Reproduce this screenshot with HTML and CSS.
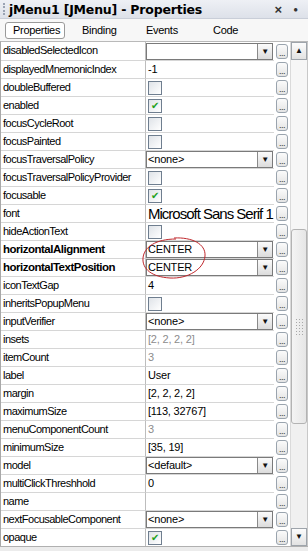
FILE: index.html
```html
<!DOCTYPE html>
<html lang="en">
<head>
    <meta charset="UTF-8">
    <title>jMenu1 [JMenu] - Properties</title>
    <link rel="stylesheet" href="styles.css">
</head>
<body>
    <div class="panel">
        <div class="titlebar">
            <span class="grip"></span>
            <span class="title">jMenu1 [JMenu] - Properties</span>
            <span class="close">&times;</span>
            <span class="dot">&#9679;</span>
        </div>
        <div class="tabs">
            <span class="tab active">Properties</span>
            <span class="tab">Binding</span>
            <span class="tab wide">Events</span>
            <span class="tab">Code</span>
        </div>
        <div class="body">
            <div class="sheet">
                <div class="row"><div class="name">disabledSelectedIcon</div><div class="value"><div class="combo"><span></span><b class="arrow">&#9660;</b></div></div><div class="more"><span>...</span></div></div>
                <div class="row"><div class="name">displayedMnemonicIndex</div><div class="value">-1</div><div class="more"><span>...</span></div></div>
                <div class="row"><div class="name">doubleBuffered</div><div class="value"><i class="check"></i></div><div class="more"><span>...</span></div></div>
                <div class="row"><div class="name">enabled</div><div class="value"><i class="check on">&#10004;</i></div><div class="more"><span>...</span></div></div>
                <div class="row"><div class="name">focusCycleRoot</div><div class="value"><i class="check"></i></div><div class="more"><span>...</span></div></div>
                <div class="row"><div class="name">focusPainted</div><div class="value"><i class="check"></i></div><div class="more"><span>...</span></div></div>
                <div class="row"><div class="name">focusTraversalPolicy</div><div class="value"><div class="combo"><span>&lt;none&gt;</span><b class="arrow">&#9660;</b></div></div><div class="more"><span>...</span></div></div>
                <div class="row"><div class="name">focusTraversalPolicyProvider</div><div class="value"><i class="check"></i></div><div class="more"><span>...</span></div></div>
                <div class="row"><div class="name">focusable</div><div class="value"><i class="check on">&#10004;</i></div><div class="more"><span>...</span></div></div>
                <div class="row"><div class="name">font</div><div class="value font-value">Microsoft Sans Serif 1</div><div class="more"><span>...</span></div></div>
                <div class="row"><div class="name">hideActionText</div><div class="value"><i class="check"></i></div><div class="more"><span>...</span></div></div>
                <div class="row"><div class="name bold">horizontalAlignment</div><div class="value"><div class="combo"><span>CENTER</span><b class="arrow">&#9660;</b></div></div><div class="more"><span>...</span></div></div>
                <div class="row"><div class="name bold">horizontalTextPosition</div><div class="value"><div class="combo"><span>CENTER</span><b class="arrow">&#9660;</b></div></div><div class="more"><span>...</span></div></div>
                <div class="row"><div class="name">iconTextGap</div><div class="value">4</div><div class="more"><span>...</span></div></div>
                <div class="row"><div class="name">inheritsPopupMenu</div><div class="value"><i class="check"></i></div><div class="more"><span>...</span></div></div>
                <div class="row"><div class="name">inputVerifier</div><div class="value"><div class="combo"><span>&lt;none&gt;</span><b class="arrow">&#9660;</b></div></div><div class="more"><span>...</span></div></div>
                <div class="row"><div class="name">insets</div><div class="value muted">[2, 2, 2, 2]</div><div class="more"><span>...</span></div></div>
                <div class="row"><div class="name">itemCount</div><div class="value muted">3</div><div class="more"><span>...</span></div></div>
                <div class="row"><div class="name">label</div><div class="value">User</div><div class="more"><span>...</span></div></div>
                <div class="row"><div class="name">margin</div><div class="value">[2, 2, 2, 2]</div><div class="more"><span>...</span></div></div>
                <div class="row"><div class="name">maximumSize</div><div class="value">[113, 32767]</div><div class="more"><span>...</span></div></div>
                <div class="row"><div class="name">menuComponentCount</div><div class="value muted">3</div><div class="more"><span>...</span></div></div>
                <div class="row"><div class="name">minimumSize</div><div class="value">[35, 19]</div><div class="more"><span>...</span></div></div>
                <div class="row"><div class="name">model</div><div class="value"><div class="combo"><span>&lt;default&gt;</span><b class="arrow">&#9660;</b></div></div><div class="more"><span>...</span></div></div>
                <div class="row"><div class="name">multiClickThreshhold</div><div class="value">0</div><div class="more"><span>...</span></div></div>
                <div class="row"><div class="name">name</div><div class="value"></div><div class="more"><span>...</span></div></div>
                <div class="row"><div class="name">nextFocusableComponent</div><div class="value"><div class="combo"><span>&lt;none&gt;</span><b class="arrow">&#9660;</b></div></div><div class="more"><span>...</span></div></div>
                <div class="row"><div class="name">opaque</div><div class="value"><i class="check on">&#10004;</i></div><div class="more"><span>...</span></div></div>
            </div>
            <div class="scrollbar">
                <div class="sb-btn">&#9650;</div>
                <div class="sb-track top"></div>
                <div class="sb-thumb"><span class="sb-grip"></span></div>
                <div class="sb-track"></div>
                <div class="sb-btn">&#9660;</div>
            </div>
            <svg class="mark" width="70" height="46" viewBox="0 0 70 46">
                <path d="M34 2 C52 1 66 8 65 20 C64 33 48 43 30 42 C12 41 2 33 3 22 C4 11 16 3 36 3" fill="none" stroke="#c0282d" stroke-width="1"/>
            </svg>
        </div>
        <div class="footer"></div>
    </div>
</body>
</html>
```

FILE: styles.css
```css
* {
    margin: 0;
    padding: 0;
    box-sizing: border-box;
}
body {
    font-family: "Liberation Sans", Arial, sans-serif;
    font-size: 11px;
    background: #ffffff;
    color: #000000;
}
.panel {
    width: 308px;
    height: 551px;
    overflow: hidden;
    background: #f0f0f0;
    display: flex;
    flex-direction: column;
}
.titlebar {
    height: 19px;
    display: flex;
    align-items: center;
    padding: 0 10px 0 3px;
    background: linear-gradient(#eef0f5, #dde1e9);
    border-bottom: 1px solid #c9ced8;
}
.grip {
    width: 2px;
    height: 12px;
    margin-right: 4px;
    border-left: 2px dotted #9aa3b3;
}
.title {
    flex: 1;
    font-family: "DejaVu Sans", sans-serif;
    font-weight: bold;
    font-size: 12.5px;
    letter-spacing: -0.2px;
}
.close {
    font-size: 13px;
    font-weight: bold;
    color: #333;
    margin-right: 11px;
}
.dot {
    font-size: 8px;
    color: #333;
}
.tabs {
    height: 22px;
    display: flex;
    align-items: center;
    padding-left: 5px;
    background: #f7f7f7;
    letter-spacing: -0.3px;
}
.tab {
    width: 64px;
    padding: 1px 0 2px 7px;
    border: 1px solid transparent;
    border-radius: 3px;
}
.tab.active {
    width: 60px;
    margin-right: 9px;
    background: #ffffff;
    border-color: #9a9a9a;
}
.tab.wide {
    width: 67px;
}
.body {
    position: relative;
    display: flex;
    height: 505px;
    border-top: 1px solid #b9b9b9;
    border-left: 1px solid #a8a8a8;
}
.sheet {
    width: 289px;
    background: #ffffff;
}
.row {
    display: flex;
    height: 18px;
}
.row + .row .name,
.row + .row .value {
    border-top: 1px solid #d6d6d6;
}
.name {
    width: 145px;
    padding-left: 2px;
    line-height: 17px;
    letter-spacing: -0.5px;
    border-right: 1px solid #bdbdbd;
    white-space: nowrap;
    overflow: hidden;
}
.name.bold {
    font-weight: bold;
    font-size: 11.5px;
    letter-spacing: -0.5px;
}
.value {
    width: 128px;
    padding-left: 2px;
    line-height: 17px;
    letter-spacing: -0.2px;
    white-space: nowrap;
    overflow: hidden;
    display: flex;
    align-items: center;
}
.value.muted {
    color: #8c8c8c;
}
.font-value {
    font-size: 15px;
    letter-spacing: -1px;
}
.more {
    width: 16px;
    display: flex;
    align-items: center;
    padding-left: 2px;
}
.more span {
    display: block;
    width: 12px;
    height: 15px;
    border: 1px solid #9aa4ae;
    border-radius: 3px;
    background: linear-gradient(#fbfbfb, #e4e4e4);
    font-size: 9px;
    line-height: 17px;
    letter-spacing: -0.5px;
    text-align: center;
    color: #333;
    overflow: hidden;
}
.check {
    display: block;
    width: 14px;
    height: 14px;
    border: 1px solid #6f7e8f;
    background: linear-gradient(135deg, #dfe3e8, #ffffff);
    font-style: normal;
    font-size: 10px;
    line-height: 12px;
    text-align: center;
    color: #20a020;
}
.combo {
    display: flex;
    width: 127px;
    height: 17px;
    margin-left: -2px;
    border: 1px solid #7a7a7a;
    background: #ffffff;
}
.combo span {
    flex: 1;
    padding-left: 1px;
    line-height: 15px;
}
.arrow {
    width: 15px;
    border-left: 1px solid #8a8a8a;
    background: linear-gradient(#fbfbfb, #dcdcdc);
    font-size: 8px;
    line-height: 15px;
    text-align: center;
    font-weight: normal;
    color: #111;
}
.scrollbar {
    width: 18px;
    display: flex;
    flex-direction: column;
    background: #f4f4f4;
    border-left: 1px solid #dadada;
    border-right: 1px solid #c8c8c8;
}
.sb-btn {
    height: 18px;
    border: 1px solid #9ea4ab;
    background: linear-gradient(#fcfcfc, #e2e2e2);
    font-size: 8px;
    line-height: 16px;
    text-align: center;
    color: #111;
}
.sb-track {
    flex: 1;
    background: #f0f0f0;
}
.sb-track.top {
    flex: 0 0 169px;
    background: #f6f6f6;
}
.sb-thumb {
    height: 195px;
    border: 1px solid #b3b3b3;
    border-radius: 3px;
    background: linear-gradient(90deg, #f4f4f4, #e6e6e6);
    display: flex;
    align-items: center;
    justify-content: center;
}
.sb-grip {
    width: 9px;
    height: 18px;
    background-image: radial-gradient(#a8a8a8 35%, transparent 40%);
    background-size: 3px 3px;
}
.mark {
    position: absolute;
    left: 139px;
    top: 194px;
}
.footer {
    flex: 1;
    background: #ececec;
    border-top: 1px solid #b0b0b0;
}
```
